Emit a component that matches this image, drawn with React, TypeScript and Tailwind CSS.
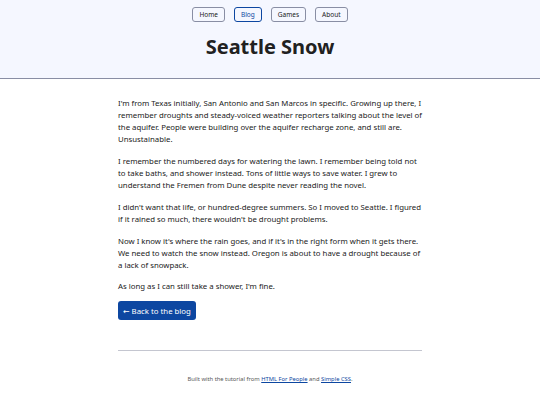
import React from "react";

export default function App() {
  const font = { fontFamily: '"Noto Sans", "DejaVu Sans", sans-serif' };
  return (
    <div className="min-h-[405px] bg-white text-[#212121]" style={font}>
      <header className="bg-[#f5f7ff] border-b border-[#898ea4] pt-[7px] pb-[19px] flex flex-col items-center">
        <nav className="flex gap-[9px]">
          <a className="border border-[#898ea4] rounded-[3px] px-[6px] h-[15px] flex items-center text-[6.5px] text-[#212121] bg-[#f5f7ff]">Home</a>
          <a className="border border-[#0d47a1] rounded-[3px] px-[6px] h-[15px] flex items-center text-[6.5px] text-[#0d47a1] bg-[#f5f7ff]">Blog</a>
          <a className="border border-[#898ea4] rounded-[3px] px-[6px] h-[15px] flex items-center text-[6.5px] text-[#212121] bg-[#f5f7ff]">Games</a>
          <a className="border border-[#898ea4] rounded-[3px] px-[6px] h-[15px] flex items-center text-[6.5px] text-[#212121] bg-[#f5f7ff]">About</a>
        </nav>
        <h1 className="mt-[13px] text-[20px] leading-[24px] font-bold">Seattle Snow</h1>
      </header>
      <main className="w-[304px] mx-auto pt-[18px] text-[7.8px] leading-[12px] flex flex-col gap-[10px]">
        <p>
          I'm from Texas initially, San Antonio and San Marcos in specific. Growing up there, I remember droughts and steady-voiced weather reporters talking about the level of the aquifer. People were building over the aquifer recharge zone, and still are. Unsustainable.
        </p>
        <p>
          I remember the numbered days for watering the lawn. I remember being told not to take baths, and shower instead. Tons of little ways to save water. I grew to understand the Fremen from Dune despite never reading the novel.
        </p>
        <p>
          I didn't want that life, or hundred-degree summers. So I moved to Seattle. I figured if it rained so much, there wouldn't be drought problems.
        </p>
        <p>
          Now I know it's where the rain goes, and if it's in the right form when it gets there. We need to watch the snow instead. Oregon is about to have a drought because of a lack of snowpack.
        </p>
        <p className="mt-[-1px]">As long as I can still take a shower, I'm fine.</p>
        <div className="mt-[-1px]">
          <a className="inline-flex items-center h-[19px] px-[5px] rounded-[3px] bg-[#0d47a1] text-white text-[7.8px]">
            ← Back to the blog
          </a>
        </div>
      </main>
      <footer className="w-[304px] mx-auto mt-[30px] border-t border-[#c4c6d0] pt-[23px] text-center text-[5.8px] leading-[10px] text-[#585858]">
        Built with the tutorial from{" "}
        <a className="text-[#0d47a1] underline">HTML For People</a> and{" "}
        <a className="text-[#0d47a1] underline">Simple CSS</a>.
      </footer>
    </div>
  );
}
